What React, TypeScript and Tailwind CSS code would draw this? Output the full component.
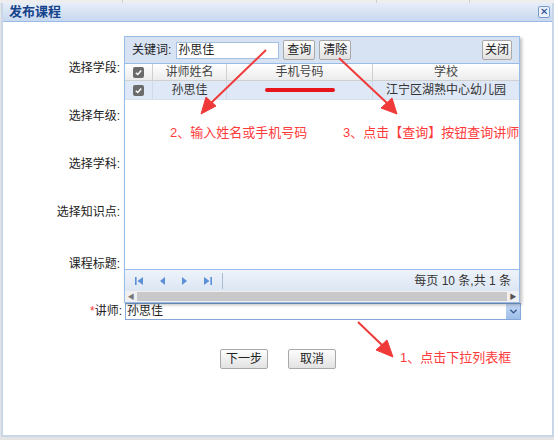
import { ChevronDown } from "lucide-react";

const font = { fontFamily: '"Liberation Sans", "Noto Sans CJK SC", sans-serif' };

const labels = [
    { text: "选择学段:", h: "h-[48px]" },
    { text: "选择年级:", h: "h-[48px]" },
    { text: "选择学科:", h: "h-[48px]" },
    { text: "选择知识点:", h: "h-[48px]" },
    { text: "课程标题:", h: "h-[56px]" },
];

function Check() {
    return (
        <span className="flex size-[11px] items-center justify-center rounded-[2px] bg-[#6b6b6b]">
            <svg viewBox="0 0 10 10" className="size-[9px]">
                <path d="M2 5.2 L4.2 7.3 L8 2.8" fill="none" stroke="#fff" strokeWidth="1.6" />
            </svg>
        </span>
    );
}

function PagerIcon({ d }: { d: string }) {
    return (
        <svg viewBox="0 0 10 10" className="size-[10px]">
            <path d={d} fill="#5b8fd6" />
        </svg>
    );
}

function Btn({ children, className = "" }: { children: React.ReactNode; className?: string }) {
    return (
        <button className={`flex h-[20px] items-center justify-center rounded-[2px] border border-[#a9a9a9] bg-gradient-to-b from-[#fdfdfd] to-[#e2e2e2] text-[12px] text-[#222] ${className}`}>
            {children}
        </button>
    );
}

export default function App() {
    return (
        <div className="relative h-[440px] w-[554px] overflow-hidden bg-[#e4e4e4] text-[12px] text-[#222]" style={font}>
            {/* background strip */}
            <div className="flex h-[3px] bg-[#eeeeee]">
                <div className="w-[123px] border-r border-[#cfcfcf]" />
                <div className="w-[254px] border-r border-[#cfcfcf]" />
                <div className="w-[93px] border-r border-[#cfcfcf]" />
            </div>

            <div className="ml-[1px] h-[434px] w-[553px] border-2 border-t-0 border-[#c9d6e8] bg-white">
                {/* title bar */}
                <div className="flex h-[19px] items-center justify-between border-b border-[#99bbe8] bg-gradient-to-b from-[#e6eef9] to-[#c8d8ef] pl-[6px] pr-[2px]">
                    <span className="text-[13px] font-bold text-[#15428b]">发布课程</span>
                    <span className="flex size-[12px] items-center justify-center rounded-[2px] border border-[#7a9ccc] bg-[#e8f0fb] text-[10px] leading-none text-[#15428b]">✕</span>
                </div>

                {/* form */}
                <div className="pt-[22px]">
                    {labels.map((l) => (
                        <div key={l.text} className={`flex items-center ${l.h}`}>
                            <span className="w-[117px] text-right">{l.text}</span>
                        </div>
                    ))}
                    <div className="flex h-[38px] items-center">
                        <span className="w-[119px] text-right">
                            <span className="text-[#ff3030]">*</span>讲师:
                        </span>
                        <div className="ml-[3px] flex h-[17px] w-[396px] items-center border border-[#86a8d8] bg-white">
                            <span className="flex-1 pl-[1px]">孙思佳</span>
                            <span className="flex h-full w-[14px] items-center justify-center bg-gradient-to-b from-[#c4d9f5] to-[#9dbde9]">
                                <ChevronDown className="size-[11px] text-[#2d4e86]" strokeWidth={3} />
                            </span>
                        </div>
                    </div>
                    <div className="mt-[19px] flex gap-[20px] pl-[217px]">
                        <Btn className="w-[48px]">下一步</Btn>
                        <Btn className="w-[48px]">取消</Btn>
                    </div>
                </div>
            </div>

            {/* dropdown panel */}
            <div className="absolute left-[124px] top-[36px] flex h-[267px] w-[396px] flex-col border border-[#99bbe8] bg-white shadow-[2px_2px_3px_rgba(0,0,0,0.25)]">
                <div className="flex h-[27px] items-center border-b border-[#99bbe8] bg-[#d7e3f3] px-[7px]">
                    <span>关键词:</span>
                    <div className="ml-[5px] flex h-[17px] w-[103px] items-center border border-[#a5bfe2] bg-white pl-[1px]">孙思佳</div>
                    <Btn className="ml-[4px] w-[32px]">查询</Btn>
                    <Btn className="ml-[4px] w-[32px]">清除</Btn>
                    <Btn className="ml-auto w-[30px]">关闭</Btn>
                </div>
                <div className="flex h-[17px] border-b border-[#d0d0d0] bg-gradient-to-b from-white to-[#ececec] text-[#444]">
                    <div className="flex w-[28px] items-center justify-center border-r border-[#d0d0d0]"><Check /></div>
                    <div className="flex w-[74px] items-center justify-center border-r border-[#d0d0d0]">讲师姓名</div>
                    <div className="flex w-[146px] items-center justify-center border-r border-[#d0d0d0]">手机号码</div>
                    <div className="flex flex-1 items-center justify-center">学校</div>
                </div>
                <div className="flex h-[19px] border-b border-[#d8e2ef] bg-[#dfe8f6] text-[#333]">
                    <div className="flex w-[28px] items-center justify-center border-r border-[#cfd9e7]"><Check /></div>
                    <div className="flex w-[74px] items-center justify-center border-r border-[#cfd9e7]">孙思佳</div>
                    <div className="flex w-[146px] items-center justify-center border-r border-[#cfd9e7]">
                        <span className="h-[4px] w-[70px] rounded-full bg-[#e8141c]" />
                    </div>
                    <div className="flex flex-1 items-center justify-center">江宁区湖熟中心幼儿园</div>
                </div>
                <div className="flex-1" />
                <div className="flex h-[22px] items-center border-t border-[#99bbe8] bg-gradient-to-b from-[#eef3fa] to-[#dce6f4] px-[8px]">
                    <div className="flex items-center gap-[13px] pl-[1px]">
                        <PagerIcon d="M1 1h1.6v8H1z M9 1 L3.5 5 L9 9z" />
                        <PagerIcon d="M8 1 L3 5 L8 9z" />
                        <PagerIcon d="M2 1 L7 5 L2 9z" />
                        <PagerIcon d="M1 1 L6.5 5 L1 9z M7.4 1H9v8H7.4z" />
                    </div>
                    <span className="ml-[9px] h-[16px] w-[1px] bg-[#a8bcd8]" />
                    <span className="ml-auto text-[#333]">每页 10 条,共 1 条</span>
                </div>
                <div className="flex h-[11px] items-center bg-[#f0f0f0]">
                    <span className="w-[12px] text-center text-[7px] leading-none text-[#777]">◀</span>
                    <span className="h-[9px] flex-1 bg-[#c8c8c8]" />
                    <span className="w-[12px] text-center text-[7px] leading-none text-[#555]">▶</span>
                </div>
            </div>

            {/* annotations */}
            <span className="absolute left-[170px] top-[123px] text-[13px] text-[#ff3a3a]">2、输入姓名或手机号码</span>
            <span className="absolute left-[343px] top-[123px] text-[13px] text-[#ff3a3a]">3、点击【查询】按钮查询讲师</span>
            <span className="absolute left-[400px] top-[348px] text-[13px] text-[#ff3a3a]">1、点击下拉列表框</span>
            <svg className="pointer-events-none absolute left-0 top-0" width="554" height="440">
                <g fill="#f03a3a" stroke="#f03a3a">
                    <line x1="266" y1="50" x2="210" y2="104" strokeWidth="2" />
                    <polygon points="201,114 206,97 216,106" strokeWidth="1" />
                    <line x1="339" y1="58" x2="388" y2="104" strokeWidth="2" />
                    <polygon points="397,114 381,108 392,98" strokeWidth="1" />
                    <line x1="358" y1="322" x2="383" y2="346" strokeWidth="2" />
                    <polygon points="393,357 376,350 387,340" strokeWidth="1" />
                </g>
            </svg>
        </div>
    );
}
